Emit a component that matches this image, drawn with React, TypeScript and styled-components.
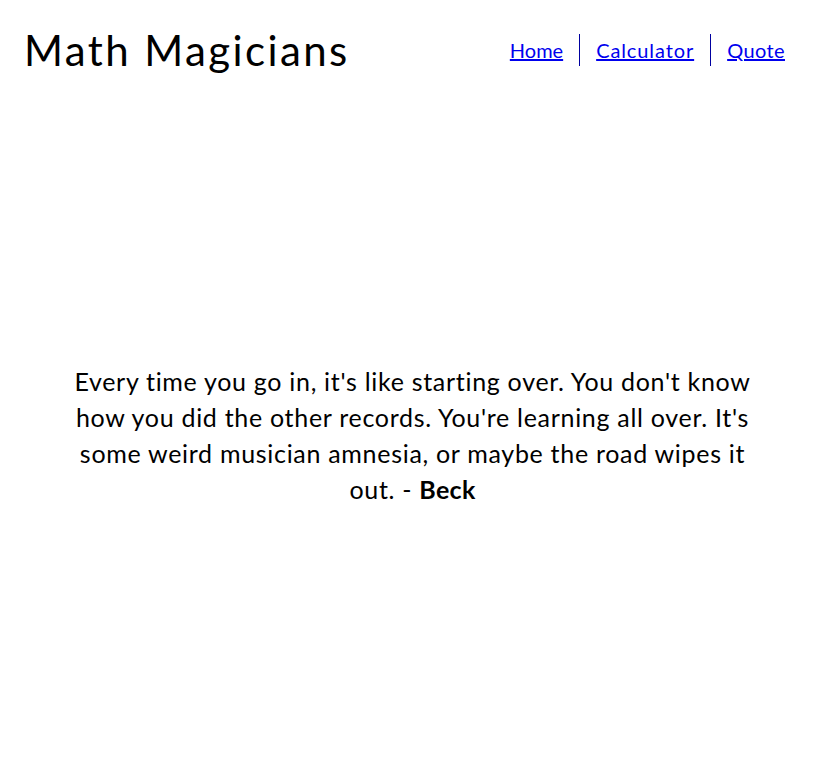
import React from "react";
import styled, { createGlobalStyle } from "styled-components";

const GlobalStyle = createGlobalStyle`
  * { box-sizing: border-box; }
  html, body { margin: 0; padding: 0; background: #fff; }
  body { font-family: "Lato", "Open Sans", sans-serif; color: #000; }
`;

const Page = styled.div`
  display: flex;
  flex-direction: column;
  min-height: 100vh;
`;

const Header = styled.header`
  display: flex;
  align-items: center;
  justify-content: space-between;
  height: 100px;
  padding: 0 24px;
`;

const Title = styled.h1`
  margin: 0;
  font-size: 42px;
  font-weight: 400;
  letter-spacing: 2.4px;
`;

const NavList = styled.ul`
  display: flex;
  list-style: none;
  margin: 0;
  padding: 0;
`;

const NavItem = styled.li<{ $sep?: boolean }>`
  display: flex;
  align-items: center;
  height: 32px;
  padding: 0 16px;
  border-left: ${(p) => (p.$sep ? "1px solid #0000a0" : "none")};
`;

const NavLink = styled.a<{ $spacing?: number }>`
  font-size: 20px;
  letter-spacing: ${(p) => p.$spacing ?? 0.5}px;
  color: #0000ee;
  text-decoration: underline;
`;

const Main = styled.main`
  flex: 1;
  display: flex;
  align-items: center;
  justify-content: center;
  padding: 0 62px;
`;

const Quote = styled.p`
  margin: 0;
  max-width: 692px;
  text-align: center;
  font-size: 25px;
  letter-spacing: 0.7px;
  line-height: 36px;
`;

const Author = styled.strong`
  font-weight: 700;
  letter-spacing: 0.3px;
`;

export default function App() {
  return (
    <>
      <GlobalStyle />
      <Page>
        <Header>
          <Title>Math Magicians</Title>
          <nav>
            <NavList>
              <NavItem>
                <NavLink href="#" $spacing={0}>Home</NavLink>
              </NavItem>
              <NavItem $sep>
                <NavLink href="#" $spacing={0.9}>Calculator</NavLink>
              </NavItem>
              <NavItem $sep>
                <NavLink href="#" $spacing={0.4}>Quote</NavLink>
              </NavItem>
            </NavList>
          </nav>
        </Header>
        <Main>
          <Quote>
            Every time you go in, it's like starting over. You don't know how
            you did the other records. You're learning all over. It's some
            weird musician amnesia, or maybe the road wipes it out. -{" "}
            <Author>Beck</Author>
          </Quote>
        </Main>
      </Page>
    </>
  );
}
